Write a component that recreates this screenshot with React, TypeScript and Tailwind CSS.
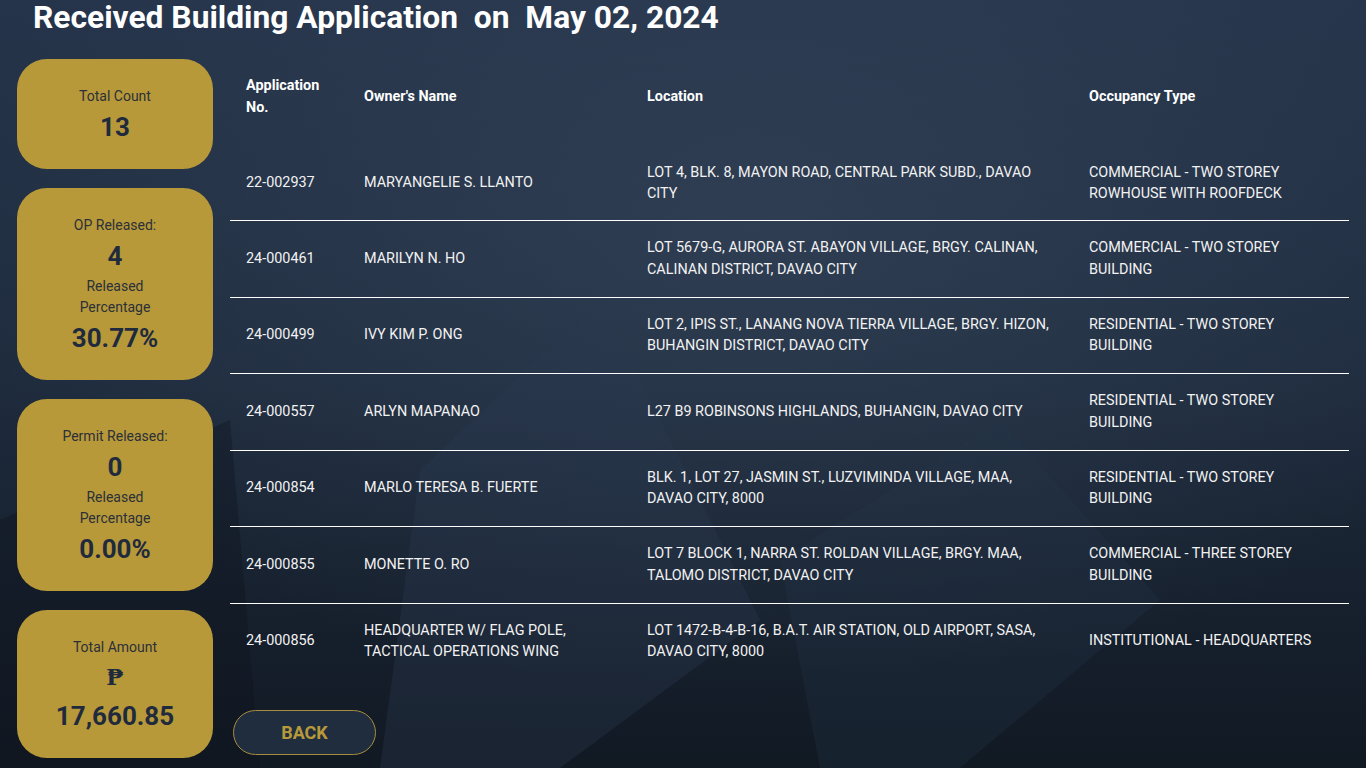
const stats = [
  { h: "h-[110px]", items: [["label", "Total Count"], ["value", "13"]] },
  {
    h: "h-[192px]",
    items: [
      ["label", "OP Released:"],
      ["value", "4"],
      ["label", "Released"],
      ["label", "Percentage"],
      ["value", "30.77%"],
    ],
  },
  {
    h: "h-[192px]",
    items: [
      ["label", "Permit Released:"],
      ["value", "0"],
      ["label", "Released"],
      ["label", "Percentage"],
      ["value", "0.00%"],
    ],
  },
  {
    h: "h-[148px]",
    items: [["label", "Total Amount"], ["peso", "₱"], ["value", "17,660.85"]],
  },
];

const rows = [
  ["22-002937", "MARYANGELIE S. LLANTO", "LOT 4, BLK. 8, MAYON ROAD, CENTRAL PARK SUBD., DAVAO CITY", "COMMERCIAL - TWO STOREY ROWHOUSE WITH ROOFDECK"],
  ["24-000461", "MARILYN N. HO", "LOT 5679-G, AURORA ST. ABAYON VILLAGE, BRGY. CALINAN, CALINAN DISTRICT, DAVAO CITY", "COMMERCIAL - TWO STOREY BUILDING"],
  ["24-000499", "IVY KIM P. ONG", "LOT 2, IPIS ST., LANANG NOVA TIERRA VILLAGE, BRGY. HIZON, BUHANGIN DISTRICT, DAVAO CITY", "RESIDENTIAL - TWO STOREY BUILDING"],
  ["24-000557", "ARLYN MAPANAO", "L27 B9 ROBINSONS HIGHLANDS, BUHANGIN, DAVAO CITY", "RESIDENTIAL - TWO STOREY BUILDING"],
  ["24-000854", "MARLO TERESA B. FUERTE", "BLK. 1, LOT 27, JASMIN ST., LUZVIMINDA VILLAGE, MAA, DAVAO CITY, 8000", "RESIDENTIAL - TWO STOREY BUILDING"],
  ["24-000855", "MONETTE O. RO", "LOT 7 BLOCK 1, NARRA ST. ROLDAN VILLAGE, BRGY. MAA, TALOMO DISTRICT, DAVAO CITY", "COMMERCIAL - THREE STOREY BUILDING"],
  ["24-000856", "HEADQUARTER W/ FLAG POLE, TACTICAL OPERATIONS WING", "LOT 1472-B-4-B-16, B.A.T. AIR STATION, OLD AIRPORT, SASA, DAVAO CITY, 8000", "INSTITUTIONAL - HEADQUARTERS"],
];

function StatCard({ h, items }: { h: string; items: string[][] }) {
  return (
    <div className={`${h} w-[196px] pt-[5px] rounded-[30px] bg-[#b8993a] flex flex-col items-center justify-center text-[#222d3c]`}>
      {items.map(([kind, text], i) =>
        kind === "label" ? (
          <div key={i} className="text-[14px] leading-[21.5px] text-[#2b3038]">{text}</div>
        ) : kind === "peso" ? (
          <div key={i} className="text-[22px] leading-[39px] font-bold text-[#1f2b3d]" style={{ fontFamily: '"DejaVu Serif", serif' }}>
            {text}
          </div>
        ) : (
          <div key={i} className="text-[26px] leading-[39px] font-bold text-[#1f2b3d]">{text}</div>
        )
      )}
    </div>
  );
}

function Backdrop() {
  return (
    <svg className="absolute inset-0 w-full h-full pointer-events-none" viewBox="0 0 1366 768" preserveAspectRatio="none">
      <defs>
        <radialGradient id="glow" cx="0.55" cy="0.3" r="0.6">
          <stop offset="0" stopColor="#3a4a60" stopOpacity="0.55" />
          <stop offset="1" stopColor="#3a4a60" stopOpacity="0" />
        </radialGradient>
      </defs>
      <rect width="1366" height="768" fill="url(#glow)" />
      <polygon points="420,470 600,300 760,620 560,768 380,768" fill="#2a3a50" opacity="0.35" />
      <polygon points="780,560 1000,420 1160,600 960,768 820,768" fill="#26354a" opacity="0.3" />
      <polygon points="0,520 230,420 260,768 0,768" fill="#0e151f" opacity="0.4" />
    </svg>
  );
}

export default function App() {
  return (
    <div
      className="relative w-full h-[768px] overflow-hidden bg-gradient-to-b from-[#25344a] via-[#1e2b3d] to-[#111923] text-white"
      style={{ fontFamily: "Roboto, sans-serif" }}
    >
      <Backdrop />
      <div className="relative flex flex-col">
        <h1 className="pl-[33px] h-[36px] text-[31.75px] leading-[36px] font-bold whitespace-pre">
          Received Building Application  on  May 02, 2024
        </h1>
        <div className="flex mt-[23px] pl-[17px] pr-[17px] gap-[17px]">
          <div className="flex flex-col gap-[19px] shrink-0">
            {stats.map((s, i) => (
              <StatCard key={i} h={s.h} items={s.items} />
            ))}
          </div>
          <div className="flex-1 flex flex-col">
            <table className="w-full table-fixed border-collapse text-[14.4px] leading-[21.75px]">
              <colgroup>
                <col className="w-[118px]" />
                <col className="w-[283px]" />
                <col className="w-[442px]" />
                <col />
              </colgroup>
              <thead>
                <tr>
                  <th className="text-left font-bold px-4 py-4 align-middle">Application No.</th>
                  <th className="text-left font-bold px-4 py-4 align-middle">Owner's Name</th>
                  <th className="text-left font-bold px-4 py-4 align-middle">Location</th>
                  <th className="text-left font-bold px-4 py-4 align-middle">Occupancy Type</th>
                </tr>
              </thead>
              <tbody>
                {rows.map((r, i) => (
                  <tr key={i} className={i < rows.length - 1 ? "border-b border-white" : ""}>
                    {r.map((c, j) => (
                      <td key={j} className={`px-4 ${i === 0 ? "pt-[27px] pb-[15px]" : "pt-4 pb-4"} align-middle text-[#f2f2f2]`}>
                        {c}
                      </td>
                    ))}
                  </tr>
                ))}
              </tbody>
            </table>
            <div className="mt-[31px] pl-[3px]">
              <button className="w-[143px] h-[45px] rounded-full border border-[#a68d3e] bg-[#1f2d3f] text-[#b8993a] text-[18px] font-bold">
                BACK
              </button>
            </div>
          </div>
        </div>
      </div>
    </div>
  );
}
